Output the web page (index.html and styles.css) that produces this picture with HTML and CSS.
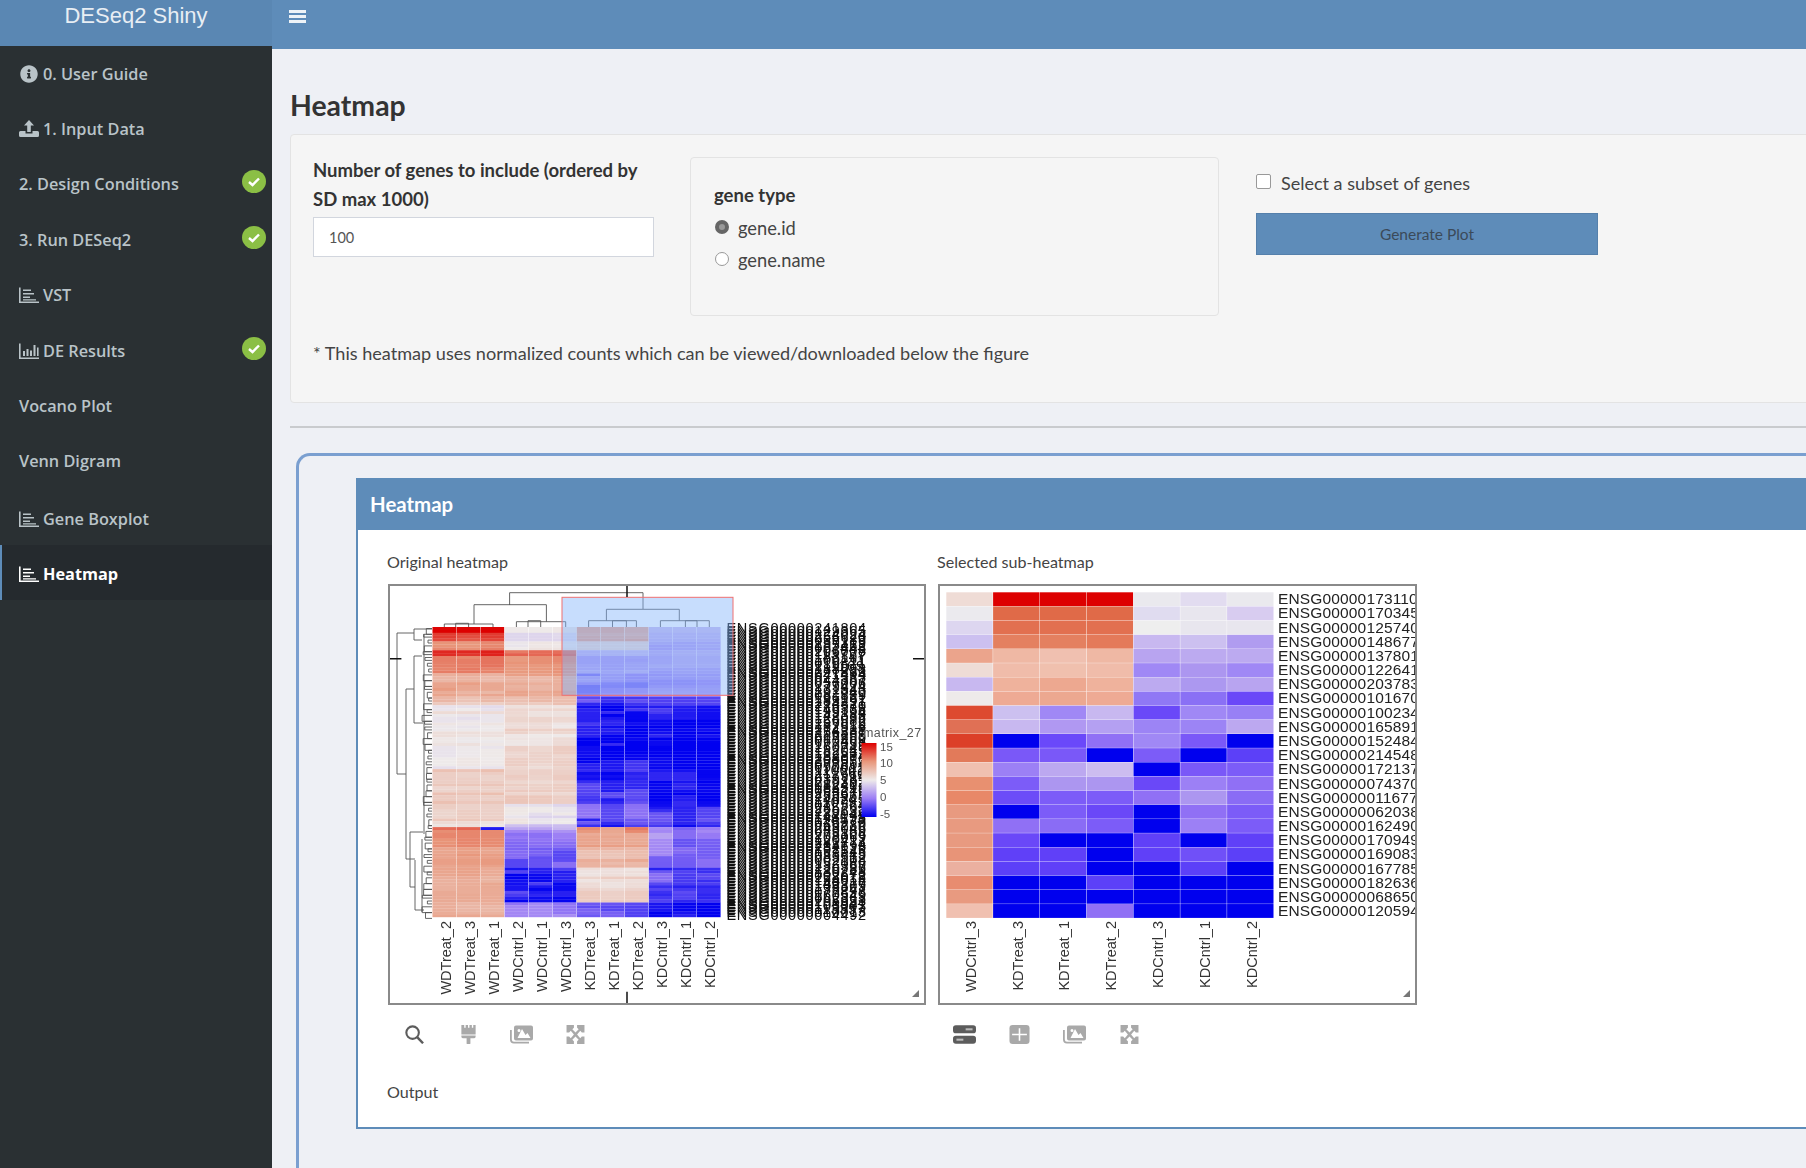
FILE: index.html
```html
<!DOCTYPE html>
<html lang="en">
<head>
    <meta charset="UTF-8">
    <title>DESeq2 Shiny</title>
    <link rel="stylesheet" href="styles.css">
</head>
<body>
    <svg class="sprites" width="0" height="0">
        <symbol id="i-info" viewBox="0 0 512 512"><path d="M256 8C119 8 8 119 8 256s111 248 248 248 248-111 248-248S393 8 256 8zm0 110c23 0 42 19 42 42s-19 42-42 42-42-19-42-42 19-42 42-42zm56 254c0 7-5 12-12 12h-88c-7 0-12-5-12-12v-24c0-7 5-12 12-12h12v-64h-12c-7 0-12-5-12-12v-24c0-7 5-12 12-12h64c7 0 12 5 12 12v100h12c7 0 12 5 12 12v24z"/></symbol>
        <symbol id="i-upload" viewBox="0 0 20 18"><path d="M10 0l5 5.500h-3.200V12H8.200V5.500H5zM1.500 11H6.500v2.500h7V11h5a1.500 1.500 0 0 1 1.500 1.500v3a1.500 1.500 0 0 1-1.500 1.500h-17A1.500 1.500 0 0 1 0 15.500v-3A1.500 1.500 0 0 1 1.500 11z"/></symbol>
        <symbol id="i-hbars" viewBox="0 0 20 17"><path d="M0 1h1.600v14H20v1.600H0zM4 3h8v1.600H4zM4 6.500h11v1.600H4zM4 10h7v1.600H4zM4 12.800h13v1.200H4z"/></symbol>
        <symbol id="i-vbars" viewBox="0 0 20 17"><path d="M0 1h1.600v14H20v1.600H0zM4 8.500h2v5H4zM7.500 6.500h2v7h-2zM11 8h2v5.500h-2zM14.500 2.500h2v11h-2zM18 5h1.600v8.500H18z"/></symbol>
        <symbol id="i-check" viewBox="0 0 24 23"><ellipse cx="12" cy="11.500" rx="12" ry="11.500" fill="#8bbf45"/><path d="M7 12l3.500 3L17 8.500" fill="none" stroke="#fff" stroke-width="2.400"/></symbol>
        <symbol id="i-search" viewBox="0 0 20 20"><circle cx="8" cy="8" r="6.600" fill="none" stroke="currentColor" stroke-width="2.200"/><path d="M12.800 12.800l6.200 6.400" stroke="currentColor" stroke-width="2.600"/></symbol>
        <symbol id="i-brush" viewBox="0 0 15 20"><path d="M0 0h3v3h1.500V0h2.500v3h1.500V0H11v3h1.500V0H15v10H0zM0 11h15v1a2 2 0 0 1-2 2H9.500v5a2 2 0 0 1-4 0v-5H2a2 2 0 0 1-2-2z"/></symbol>
        <symbol id="i-images" viewBox="0 0 23 18"><path d="M6 0h15a2 2 0 0 1 2 2v11a2 2 0 0 1-2 2H6a2 2 0 0 1-2-2V2a2 2 0 0 1 2-2zm1.500 12.500h13l-3-5-2 2-3.500-6zM9 6.500a1.500 1.500 0 1 0 0-3 1.500 1.500 0 0 0 0 3z" fill-rule="evenodd"/><path d="M0 4.500h1.800V14a2.200 2.200 0 0 0 2.200 2.200h15V18H4a4 4 0 0 1-4-4z"/></symbol>
        <symbol id="i-expand" viewBox="0 0 17 18"><path d="M0 0h7v2.500L5.500 4 8.500 7l3-3L10 2.500V0h7v7h-2.500L13 5.500 10 9l3 3.500 1.500-1.500H17v7h-7v-2.500l1.500-1.500-3-3-3 3L7 15.500V18H0v-7h2.500L4 12.500 7 9 4 5.500 2.500 7H0z"/></symbol>
        <symbol id="i-toggle" viewBox="0 0 20 16"><rect width="20" height="7" y="0" rx="2.500"/><rect width="20" height="7" y="9" rx="2.500"/><rect x="11" y="2.600" width="6" height="1.800" fill="#bbb"/><rect x="3" y="11.600" width="6" height="1.800" fill="#bbb"/></symbol>
        <symbol id="i-table" viewBox="0 0 19 18"><rect width="19" height="18" rx="3"/><path d="M2.500 9h14M9.500 3V15" stroke="#fff" stroke-width="1.500" fill="none"/></symbol>
    </svg>

    <aside class="sidebar">
        <div class="logo">DESeq2 Shiny</div>
        <nav class="menu">
            <a class="menu-item"><svg class="menu-icon"><use href="#i-info"/></svg>0. User Guide</a>
            <a class="menu-item"><svg class="menu-icon"><use href="#i-upload"/></svg>1. Input Data</a>
            <a class="menu-item">2. Design Conditions<svg class="menu-check"><use href="#i-check"/></svg></a>
            <a class="menu-item">3. Run DESeq2<svg class="menu-check"><use href="#i-check"/></svg></a>
            <a class="menu-item"><svg class="menu-icon"><use href="#i-hbars"/></svg>VST</a>
            <a class="menu-item"><svg class="menu-icon"><use href="#i-vbars"/></svg>DE Results<svg class="menu-check"><use href="#i-check"/></svg></a>
            <a class="menu-item">Vocano Plot</a>
            <a class="menu-item">Venn Digram</a>
            <a class="menu-item low"><svg class="menu-icon"><use href="#i-hbars"/></svg>Gene Boxplot</a>
            <a class="menu-item low active"><svg class="menu-icon"><use href="#i-hbars"/></svg>Heatmap</a>
        </nav>
    </aside>

    <div class="main">
        <header class="topbar">
            <span class="burger"><i></i><i></i><i></i></span>
        </header>
        <div class="content">
            <h1>Heatmap</h1>
            <section class="well">
                <div class="well-row">
                    <div class="field">
                        <label class="field-label" for="ngenes">Number of genes to include (ordered by SD max 1000)</label>
                        <input type="text" id="ngenes" value="100">
                    </div>
                    <div class="gene-type">
                        <div class="field-label">gene type</div>
                        <div class="radios">
                            <label class="radio"><span class="radio-dot on"></span>gene.id</label>
                            <label class="radio"><span class="radio-dot"></span>gene.name</label>
                        </div>
                    </div>
                    <div class="actions">
                        <label class="check"><span class="check-box"></span>Select a subset of genes</label>
                        <button type="button">Generate Plot</button>
                    </div>
                </div>
                <p class="note">* This heatmap uses normalized counts which can be viewed/downloaded below the figure</p>
            </section>
            <hr>
            <section class="outer-box">
                <div class="box">
                    <div class="box-header">Heatmap</div>
                    <div class="box-body">
                        <div class="plots">
                            <div class="plot-col">
                                <div class="caption">Original heatmap</div>
                                <div class="plot plot-main"><svg id="heatmap-main" width="534" height="417" viewBox="2 2 534 417"></svg><span class="resize"></span></div>
                                <div class="tools">
                                    <svg class="tool dark"><use href="#i-search"/></svg>
                                    <svg class="tool"><use href="#i-brush"/></svg>
                                    <svg class="tool"><use href="#i-images"/></svg>
                                    <svg class="tool"><use href="#i-expand"/></svg>
                                </div>
                            </div>
                            <div class="plot-col">
                                <div class="caption">Selected sub-heatmap</div>
                                <div class="plot plot-sub"><svg id="heatmap-sub" width="475" height="417" viewBox="2 2 475 417"></svg><span class="resize"></span></div>
                                <div class="tools tools-wide">
                                    <svg class="tool dark"><use href="#i-toggle"/></svg>
                                    <svg class="tool"><use href="#i-table"/></svg>
                                    <svg class="tool"><use href="#i-images"/></svg>
                                    <svg class="tool"><use href="#i-expand"/></svg>
                                </div>
                            </div>
                        </div>
                        <div class="caption output">Output</div>
                    </div>
                </div>
            </section>
        </div>
    </div>
    <script src="heatmap.js"></script>
</body>
</html>
```

FILE: styles.css
```css
html, body {
    height: 100%;
    margin: 0;
    overflow: hidden;
}
body {
    display: flex;
    font-family: Lato, "Open Sans", sans-serif;
    color: #333;
    background-color: #eef0f5;
}
.sprites {
    position: absolute;
}
.sidebar {
    width: 272px;
    flex: none;
    background-color: #2a3033;
}
.logo {
    height: 46px;
    padding-bottom: 14px;
    box-sizing: border-box;
    display: flex;
    align-items: center;
    justify-content: center;
    background-color: #5a87b3;
    color: #e8eef4;
    font-family: "Liberation Sans", sans-serif;
    font-size: 22px;
}
.menu-item {
    height: 55.4px;
    padding-left: 19px;
    box-sizing: border-box;
    display: flex;
    align-items: center;
    color: #b9c3c8;
    font-family: "Open Sans", sans-serif;
    font-size: 16.300px;
    font-weight: 600;
}
.menu-item.low {
    padding-top: 4px;
}
.menu-item.active {
    background-color: #252a2e;
    border-left: 2px solid #5e8cb9;
    padding-left: 17px;
    color: #fff;
    font-weight: 700;
}
.menu-icon {
    width: 20px;
    height: 18px;
    margin-right: 4px;
    fill: currentColor;
}
.menu-check {
    width: 24px;
    height: 23px;
    margin-left: auto;
    margin-right: 6px;
    margin-top: -5px;
}
.main {
    flex: 1;
    min-width: 0;
}
.topbar {
    height: 49px;
    background-color: #5e8cb9;
    padding: 10px 0 0 17px;
    box-sizing: border-box;
}
.burger {
    display: block;
    width: 17px;
}
.burger i {
    display: block;
    height: 3px;
    margin-bottom: 2px;
    background-color: #eef3f7;
}
.content {
    padding-left: 18px;
}
h1 {
    margin: 0;
    height: 85px;
    padding-top: 38px;
    box-sizing: border-box;
    font-size: 28.400px;
    line-height: 36px;
    font-weight: 700;
    color: #333;
}
.well {
    width: 1540px;
    height: 269px;
    box-sizing: border-box;
    padding: 21px 0 0 22px;
    background-color: #f5f5f5;
    border: 1px solid #e3e3e3;
    border-radius: 4px;
}
.well-row {
    display: flex;
    height: 185px;
}
.field {
    width: 341px;
}
.field-label {
    display: block;
    font-size: 18.500px;
    line-height: 29px;
    font-weight: 700;
    color: #333;
}
.field input {
    display: block;
    width: 341px;
    height: 40px;
    box-sizing: border-box;
    margin-top: 3px;
    padding: 0 15px;
    border: 1px solid #d2d6de;
    background-color: #fff;
    font-family: Lato, sans-serif;
    font-size: 14.500px;
    color: #555;
}
.gene-type {
    width: 529px;
    height: 159px;
    box-sizing: border-box;
    margin: 1px 0 0 36px;
    padding: 23px 0 0 23px;
    border: 1px solid #e3e3e3;
    border-radius: 4px;
}
.radios {
    margin-top: 2px;
}
.radio {
    display: flex;
    align-items: center;
    height: 32px;
    font-size: 18.300px;
    color: #444;
}
.radio-dot {
    width: 14px;
    height: 14px;
    box-sizing: border-box;
    margin: -3px 9px 0 1px;
    border: 1px solid #999;
    border-radius: 50%;
    background-color: #fff;
}
.radio-dot.on {
    border: 4px solid #666;
    background-color: #999;
}
.actions {
    margin-left: 37px;
    width: 342px;
}
.check {
    display: flex;
    align-items: center;
    margin: 11px 0 14px 0;
    height: 32px;
    font-size: 18px;
    color: #444;
}
.check-box {
    width: 13px;
    height: 13px;
    margin-right: 10px;
    margin-top: -3px;
    border: 1px solid #999;
    border-radius: 2px;
    background-color: #fff;
}
.actions button {
    display: block;
    width: 342px;
    height: 42px;
    border: 1px solid #5580ab;
    background-color: #5e8cb9;
    color: #3b4a59;
    font-family: Lato, sans-serif;
    font-size: 15.500px;
}
.note {
    margin: 0;
    font-size: 18.100px;
    line-height: 24px;
    color: #444;
}
hr {
    margin: 23px 0 25px;
    border: 0;
    border-top: 2px solid #c9cbce;
}
.outer-box {
    margin-left: 6px;
    padding: 22px 0 0 57px;
    width: 1540px;
    height: 760px;
    box-sizing: border-box;
    border-left: 3px solid #7a9fd0;
    border-top: 3px solid #7a9fd0;
    border-top-left-radius: 14px;
}
.box {
    height: 651px;
    box-sizing: border-box;
    background-color: #fff;
    border-left: 2px solid #5e8cb9;
    border-bottom: 2px solid #5e8cb9;
}
.box-header {
    height: 52px;
    padding-left: 12px;
    display: flex;
    align-items: center;
    background-color: #5e8cb9;
    color: #fff;
    font-size: 20.400px;
    font-weight: 700;
}
.box-body {
    padding-left: 30px;
}
.plots {
    display: flex;
    gap: 12px;
}
.caption {
    margin-left: -1px;
    font-size: 16.100px;
    line-height: 20px;
    color: #444;
}
.plot-col .caption {
    height: 54px;
    padding-top: 22px;
    box-sizing: border-box;
}
.plot {
    position: relative;
    height: 421px;
    box-sizing: border-box;
    border: 2px solid #8a8a8a;
    overflow: hidden;
}
.plot-main {
    width: 538px;
}
.plot-sub {
    width: 479px;
}
.plot svg {
    display: block;
    filter: blur(0.6px);
}
.resize {
    position: absolute;
    right: 5px;
    bottom: 6px;
    width: 0;
    height: 0;
    border-left: 7px solid transparent;
    border-bottom: 7px solid #777;
}
.tools {
    display: flex;
    align-items: center;
    height: 30px;
    margin-top: 14px;
    padding-left: 15px;
}
.tool {
    width: 23px;
    height: 19px;
    margin-right: 30.500px;
    fill: #a9a9a9;
    color: #a9a9a9;
}
.tools-wide .tool {
    margin-right: 32px;
}
.tool.dark {
    fill: #5c5c5c;
    color: #5c5c5c;
}
.output {
    margin-top: 33px;
}
```

FILE: heatmap.js
```js
// heatmap plots, drawn as svg from the data below
const NS = 'http://www.w3.org/2000/svg';
const STOPS = [[-1, [0, 0, 240]], [-0.5, [155, 125, 245]], [0, [238, 234, 234]], [0.5, [232, 150, 122]], [1, [221, 0, 0]]];

let seed = 27;
function rnd() {
    seed = (seed * 16807) % 2147483647;
    return seed / 2147483647;
}

function color(t) {
    t = Math.max(-1, Math.min(1, t));
    for (let i = 1; i < STOPS.length; i++) {
        if (t <= STOPS[i][0]) {
            const a = STOPS[i - 1], b = STOPS[i];
            const f = (t - a[0]) / (b[0] - a[0]);
            const c = a[1].map((v, k) => Math.round(v + (b[1][k] - v) * f));
            return 'rgb(' + c.join(',') + ')';
        }
    }
}

function add(svg, tag, attrs, text) {
    const el = document.createElementNS(NS, tag);
    for (const k in attrs) el.setAttribute(k, attrs[k]);
    if (text !== undefined) el.textContent = text;
    svg.appendChild(el);
    return el;
}

function colLabel(svg, x, y, name) {
    add(svg, 'text', {
        transform: 'translate(' + x + ' ' + y + ') rotate(-90)',
        'text-anchor': 'end',
        'font-family': 'Liberation Sans, sans-serif',
        'font-size': 14.500,
        fill: '#333'
    }, name);
}

// rows, WDTreat, WDCntrl, KDTreat, KDCntrl
const BANDS = [
    [2, 0.98, 0.02, 0.42, -0.2], [3, 0.72, -0.08, 0.38, -0.25], [3, 0.5, 0.0, 0.05, -0.3],
    [2, 0.82, 0.62, -0.3, -0.3], [6, 0.55, 0.5, -0.38, -0.36], [8, 0.36, 0.38, -0.52, -0.45],
    [3, 0.25, 0.25, -0.82, -0.8], [22, 0.02, 0.1, -0.92, -0.95], [12, 0.2, 0.12, -0.88, -0.9],
    [7, 0.12, -0.06, -0.75, -0.88], [1, 0.1, -0.25, -0.85, -0.95], [1, 0.7, -0.35, 0.5, -0.6],
    [6, 0.6, -0.5, 0.45, -0.55], [7, 0.45, -0.65, 0.3, -0.55], [12, 0.4, -0.85, 0.1, -0.75],
    [5, 0.4, -0.4, -0.65, -0.9]
];

function drawMain() {
    const svg = document.getElementById('heatmap-main');
    const x0 = 44.5, y0 = 43, cw = 24.04, rh = 2.9;
    // noise is held over a few rows so the colours come in patches
    const groupNoise = [0, 0, 0, 0];
    const colNoise = new Array(12).fill(0);
    let row = 0;
    BANDS.forEach(b => {
        for (let n = 0; n < b[0]; n++, row++) {
            for (let g = 0; g < 4; g++) {
                if (rnd() < 0.5) groupNoise[g] = (rnd() - 0.5) * 0.14;
                const amp = b[g + 1] < -0.5 ? 0.32 : 0.08;
                for (let c = 0; c < 3; c++) {
                    const k = g * 3 + c;
                    if (rnd() < 0.35) colNoise[k] = (rnd() - 0.5) * amp;
                    let t = b[g + 1] + groupNoise[g] + colNoise[k];
                    if (row === 69 && g === 0 && c === 2) t = -0.9;
                    add(svg, 'rect', {
                        x: x0 + k * cw, y: y0 + row * rh,
                        width: cw - 0.4, height: rh + 0.2, fill: color(t)
                    });
                }
            }
        }
    });

    // dendrograms
    let tree = 'M121.6 8.7H255M121.600 8.7V21M255 8.7V25'
        + 'M86 20.7H158.400M86 20.7V40M158.400 20.7V37.7'
        + 'M56.300 40H105M56.300 40V43M105 40V43M67.700 39.300H80.600V43M67.700 39.300V43'
        + 'M128.400 37.700H177.700M128.400 37.700V43M177.700 37.700V43M140 36.700H152.700V43M140 36.700V43'
        + 'M218.400 25.300H291.300M218.400 25.300V36.700M291.300 25.300V36.700'
        + 'M200.600 36.700H248.400M200.600 36.700V43M248.400 36.700V43M224.500 36.700H238.400V43M224.500 36.700V43'
        + 'M272.400 36.700H321.300M272.400 36.700V43M321.300 36.700V43M297.400 36.700H309V43M297.400 36.700V43'
        + 'M9 49V190M9 49H26M9 190H18M18 105V275M18 105H26M18 275H27M26 72V139M26 72H34M26 139H35'
        + 'M27 276V326M27 326H36M22 248V303M22 248H35M22 303H27M26 45V56M26 45H44M26 56H34M36 50V250M34 255V328';
    for (let r = 0; r < 100; r += 2) {
        const a = y0 + r * rh + rh / 2, b = a + rh * (1 + Math.floor(rnd() * 2));
        const x = 34 + rnd() * 7;
        tree += 'M' + x.toFixed(1) + ' ' + a.toFixed(1) + 'V' + b.toFixed(1)
            + 'M' + x.toFixed(1) + ' ' + a.toFixed(1) + 'H44M' + x.toFixed(1) + ' ' + b.toFixed(1) + 'H44';
    }
    add(svg, 'path', { d: tree, fill: 'none', stroke: '#555', 'stroke-width': 0.9 });

    // row labels overlap, there are too many for the height
    for (let r = 0; r < 100; r++) {
        let id = 'ENSG00000';
        for (let i = 0; i < 6; i++) id += Math.floor(rnd() * (i === 0 ? 3 : 10));
        add(svg, 'text', {
            x: 338.5, y: y0 + r * rh + 6,
            'font-family': 'Liberation Sans, sans-serif', 'font-size': 14.500, 'letter-spacing': 0.7, fill: '#111'
        }, id);
    }

    ['WDTreat_2', 'WDTreat_3', 'WDTreat_1', 'WDCntrl_2', 'WDCntrl_1', 'WDCntrl_3',
     'KDTreat_3', 'KDTreat_1', 'KDTreat_2', 'KDCntrl_3', 'KDCntrl_1', 'KDCntrl_2'].forEach((name, i) => {
        colLabel(svg, x0 + (i + 0.5) * cw + 6, 337, name);
    });

    // legend
    const grad = add(svg, 'linearGradient', { id: 'legend', x1: 0, y1: 0, x2: 0, y2: 1 });
    [[0, 1], [0.25, 0.5], [0.5, 0], [0.75, -0.5], [1, -1]].forEach(s => {
        add(grad, 'stop', { offset: s[0], 'stop-color': color(s[1]) });
    });
    add(svg, 'rect', { x: 473.5, y: 159, width: 15, height: 74, fill: 'url(#legend)' });
    add(svg, 'text', { x: 475, y: 153, 'font-family': 'Liberation Sans, sans-serif', 'font-size': 12.500, 'letter-spacing': 0.4, fill: '#555' }, 'matrix_27');
    [['15', 167], ['10', 183], ['5', 200], ['0', 217], ['-5', 234]].forEach(l => {
        add(svg, 'text', { x: 492, y: l[1], 'font-family': 'Liberation Sans, sans-serif', 'font-size': 11.500, fill: '#555' }, l[0]);
    });

    // brush selection and its crosshair
    add(svg, 'rect', { x: 174, y: 13.3, width: 171, height: 98, fill: 'rgba(130,180,250,0.45)', stroke: '#f07070', 'stroke-width': 1 });
    add(svg, 'path', { d: 'M239 1V13M1 74.700H13.400M525 74.700H538M239 407.700V419', stroke: '#111', 'stroke-width': 1.500 });
}

const SUB_IDS = ['173110', '170345', '125740', '148677', '137801', '122641', '203783', '101670', '100234', '165891',
    '152484', '214548', '172137', '074370', '011677', '062038', '162490', '170949', '169083', '167785', '182636', '068650', '120594'];
const B = '#0000ee';
const SUB_ROWS = [
    ['#efdcd6', '#dd0000', '#dd0000', '#dd0000', '#eae9ee', '#e2dcf0', '#eae9ee'],
    ['#ebeaee', '#e06a48', '#e06a48', '#e06a48', '#e0dcf0', '#e8e6ee', '#d8ccf0'],
    ['#ddd6f0', '#e27050', '#e27050', '#e27050', '#eeeeee', '#e8e6ee', '#e8e6ee'],
    ['#ccc0f0', '#e48060', '#e48060', '#e47a5a', '#c8b8f0', '#ccc0f0', '#b09cf0'],
    ['#eba48c', '#efb8a4', '#f0c0b0', '#efb8a4', '#b8a4f0', '#bcaaf0', '#bcaaf0'],
    ['#eedcd6', '#f0bcaa', '#f0c0ae', '#f0bcaa', '#a088f5', '#ac96f0', '#a088f5'],
    ['#c8b8f0', '#efb29c', '#eda890', '#efb29c', '#bcaaf0', '#ac98f0', '#b8a4f0'],
    ['#eeeaea', '#eeaa94', '#eca890', '#eeaa94', '#9078f5', '#8a70f5', '#6a48f8'],
    ['#dd4a30', '#ccc0f0', '#a088f5', '#c8b8f0', '#6a48f8', '#a088f5', '#9880f5'],
    ['#e07055', '#c8b8f0', '#b098f2', '#b4a0f2', '#9c84f5', '#9c84f5', '#bca8f0'],
    ['#dc3f28', B, '#6a48fa', '#9070f5', '#a088f5', '#7a58f8', B],
    ['#e27a5a', '#7a58f8', '#7a58f8', B, '#7c5cf8', B, '#5c40f8'],
    ['#f0c0b0', '#9c80f5', '#bca8f0', '#ccbcf0', B, '#7a58f8', '#7c5cf8'],
    ['#e89070', '#7c5cf8', '#ac96f0', '#ac96f0', '#6a48f8', '#9c80f5', '#9070f5'],
    ['#e88868', '#6c4cf8', '#7c5cf8', '#7c5cf8', '#9070f5', '#ac96f0', '#8a6cf5'],
    ['#e89a80', B, '#7c5cf8', '#6a48f8', B, '#9070f5', '#7c5cf8'],
    ['#e89a80', '#9070f5', '#8a6cf5', '#7c5cf8', B, '#9c80f5', '#7c5cf8'],
    ['#e89a80', '#6a48f8', B, B, '#6040f8', B, '#6040f8'],
    ['#e89478', '#6040f8', '#6040f8', B, '#6040f8', '#7050f8', '#5c40f8'],
    ['#ebb0a0', '#5c40f8', '#6040f8', B, B, '#5c40f8', B],
    ['#e88c70', B, B, '#5c40f8', B, B, B],
    ['#e89a80', B, B, B, B, B, B],
    ['#f0c0b0', B, B, '#9070f5', B, B, B]
];

function drawSub() {
    const svg = document.getElementById('heatmap-sub');
    const x0 = 8.3, y0 = 8.3, cw = 46.8, rh = 14.17;
    SUB_ROWS.forEach((cols, r) => {
        cols.forEach((fill, c) => {
            add(svg, 'rect', { x: x0 + c * cw, y: y0 + r * rh, width: cw - 0.4, height: rh - 0.3, fill: fill });
        });
        add(svg, 'text', {
            x: 340, y: y0 + r * rh + 12,
            'font-family': 'Liberation Sans, sans-serif', 'font-size': 15.500, 'letter-spacing': 0.15, fill: '#222'
        }, 'ENSG00000' + SUB_IDS[r]);
    });
    ['WDCntrl_3', 'KDTreat_3', 'KDTreat_1', 'KDTreat_2', 'KDCntrl_3', 'KDCntrl_1', 'KDCntrl_2'].forEach((name, i) => {
        colLabel(svg, x0 + (i + 0.5) * cw + 6, 337, name);
    });
}

drawMain();
drawSub();
```
